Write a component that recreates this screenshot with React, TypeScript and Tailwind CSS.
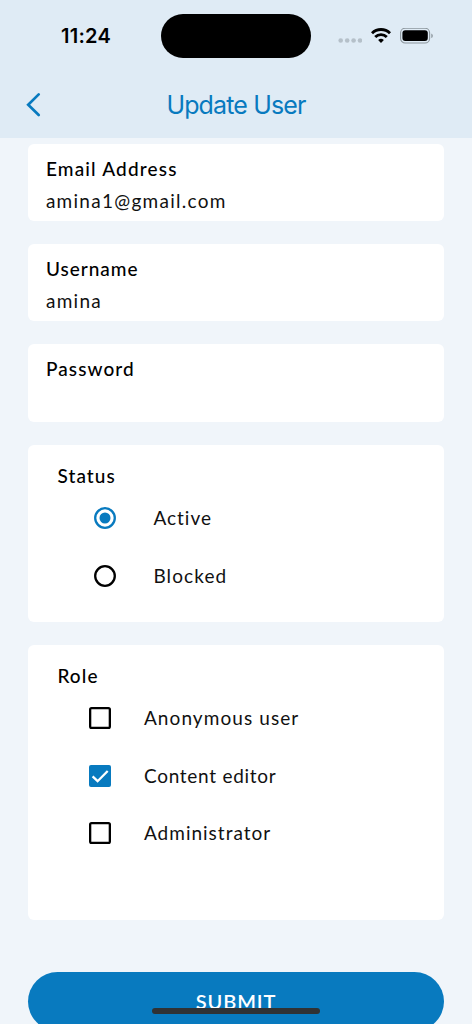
import type { ReactNode } from "react";

const fields = [
  { label: "Email Address", value: "amina1@gmail.com", labelTracking: "tracking-[1.17px]", valueTracking: "tracking-[1.28px]" },
  { label: "Username", value: "amina", labelTracking: "tracking-[1px]", valueTracking: "tracking-[1.3px]" },
  { label: "Password", value: "", labelTracking: "tracking-[1.1px]", valueTracking: "tracking-[1.3px]" },
];

const statuses = [
  { label: "Active", selected: true, tracking: "tracking-[1px]" },
  { label: "Blocked", selected: false, tracking: "tracking-[1.1px]" },
];

const roles = [
  { label: "Anonymous user", checked: false, tracking: "tracking-[1.08px]" },
  { label: "Content editor", checked: true, tracking: "tracking-[0.72px]" },
  { label: "Administrator", checked: false, tracking: "tracking-[1px]" },
];

function StatusBar() {
  return (
    <div className="flex h-[71px] items-center">
      <div className="w-[161px] pl-[61px] font-['Inter',sans-serif] text-[20px] font-semibold leading-6 tracking-[0.25px] text-black">
        11:24
      </div>
      <div className="h-[44px] w-[150px] rounded-full bg-black" />
      <div className="ml-[27px] flex items-center">
        <svg viewBox="0 0 24 16" className="h-4 w-6" fill="#b5c0c9">
          <circle cx="2.7" cy="12.5" r="2.3" />
          <circle cx="9.2" cy="12.5" r="2.3" />
          <circle cx="15.6" cy="12.5" r="2.3" />
          <circle cx="22" cy="12.5" r="2.3" />
        </svg>
        <svg viewBox="0 0 20 16" className="ml-[9px] h-4 w-5" fill="none" stroke="#000" strokeWidth="2.9">
          <path d="M1 5.2a12.9 12.9 0 0118 0" />
          <path d="M4.2 9a8.3 8.3 0 0111.6 0" />
          <path d="M10 15l-2.9-2.9a4.1 4.1 0 015.8 0z" fill="#000" stroke="none" />
        </svg>
        <svg viewBox="0 0 34 16" className="ml-[9px] h-4 w-[34px]" fill="none">
          <rect x="0.6" y="0.2" width="29" height="14.8" rx="4.6" stroke="#8c969d" strokeWidth="1.1" />
          <rect x="2.4" y="2.2" width="25.4" height="10.8" rx="2.9" fill="#000" />
          <path d="M31.3 5.4c2 .8 2 3.9 0 4.7z" fill="#8c969d" />
        </svg>
      </div>
    </div>
  );
}

function OptionCard({ title, className, children }: { title: string; className: string; children: ReactNode }) {
  return (
    <section className={`rounded-[6px] bg-white pt-[19px] ${className}`}>
      <h2 className="pl-[29px] text-[19px] font-medium leading-6 tracking-[1.1px] text-black">{title}</h2>
      {children}
    </section>
  );
}

export default function App() {
  return (
    <div className="relative h-[1024px] w-[472px] overflow-hidden bg-[#f0f5fa] font-['Lato','Open_Sans',sans-serif] text-[#111]">
      <header className="h-[138px] bg-[#dfebf5]">
        <StatusBar />
        <div className="grid h-[67px] grid-cols-[1fr_auto_1fr] items-center">
          <button aria-label="Back" className="ml-[25px] w-4">
            <svg viewBox="0 0 16 26" className="h-[26px] w-4" fill="none" stroke="#087abf" strokeWidth="2.7" strokeLinecap="round">
              <path d="M13.7 2.4L3.2 12.7 13.7 23" />
            </svg>
          </button>
          <h1 className="pt-px font-['Inter',sans-serif] text-[25px] leading-8 tracking-[-0.85px] text-[#087abf]">Update User</h1>
        </div>
      </header>

      <main className="flex flex-col gap-[23px] px-[28.4px] pt-[5.5px]">
        {fields.map((field) => (
          <label key={field.label} className="flex h-[77.4px] flex-col rounded-[6px] bg-white pl-[17.5px] pt-[13px] text-[19px]">
            <span className={`h-8 font-medium leading-6 text-black ${field.labelTracking}`}>{field.label}</span>
            <span className={`leading-6 ${field.valueTracking}`}>{field.value}</span>
          </label>
        ))}

        <OptionCard title="Status" className="h-[177px]">
          <div className="pl-[65.6px] pt-px">
            {statuses.map((status) => (
              <div key={status.label} className="flex h-[58px] items-center gap-[37.4px]">
                <svg viewBox="0 0 22 22" className={status.selected ? "size-[22px] text-[#087abf]" : "size-[22px] text-black"}>
                  <circle cx="11" cy="11" r="9.8" fill="none" stroke="currentColor" strokeWidth="2.3" />
                  {status.selected && <circle cx="11" cy="11" r="5.5" fill="currentColor" />}
                </svg>
                <span className={`text-[19px] leading-6 ${status.tracking}`}>{status.label}</span>
              </div>
            ))}
          </div>
        </OptionCard>

        <OptionCard title="Role" className="h-[275.6px]">
          <div className="pl-[60.9px] pt-[1.3px]">
            {roles.map((role) => (
              <div key={role.label} className="flex h-[57.7px] items-center gap-[32.7px]">
                <svg viewBox="0 0 22 22" className="size-[22px]" fill="none">
                  {role.checked ? (
                    <>
                      <rect width="22" height="22" rx="2" fill="#087abf" />
                      <path d="M3.6 11.4l5 4.8L18.7 6" stroke="#fff" strokeWidth="2.3" />
                    </>
                  ) : (
                    <rect x="1.15" y="1.15" width="19.7" height="19.7" rx="1.4" stroke="#000" strokeWidth="2.3" />
                  )}
                </svg>
                <span className={`text-[19px] leading-6 ${role.tracking}`}>{role.label}</span>
              </div>
            ))}
          </div>
        </OptionCard>

        <button className="mt-[28.6px] h-[59px] rounded-full bg-[#087abf] text-[20px] font-semibold leading-6 tracking-[0.9px] text-white">
          SUBMIT
        </button>
      </main>

      {/* Home indicator */}
      <div className="absolute bottom-[10px] left-[152px] h-[6px] w-[168px] rounded-full bg-[#303234]" />
    </div>
  );
}
